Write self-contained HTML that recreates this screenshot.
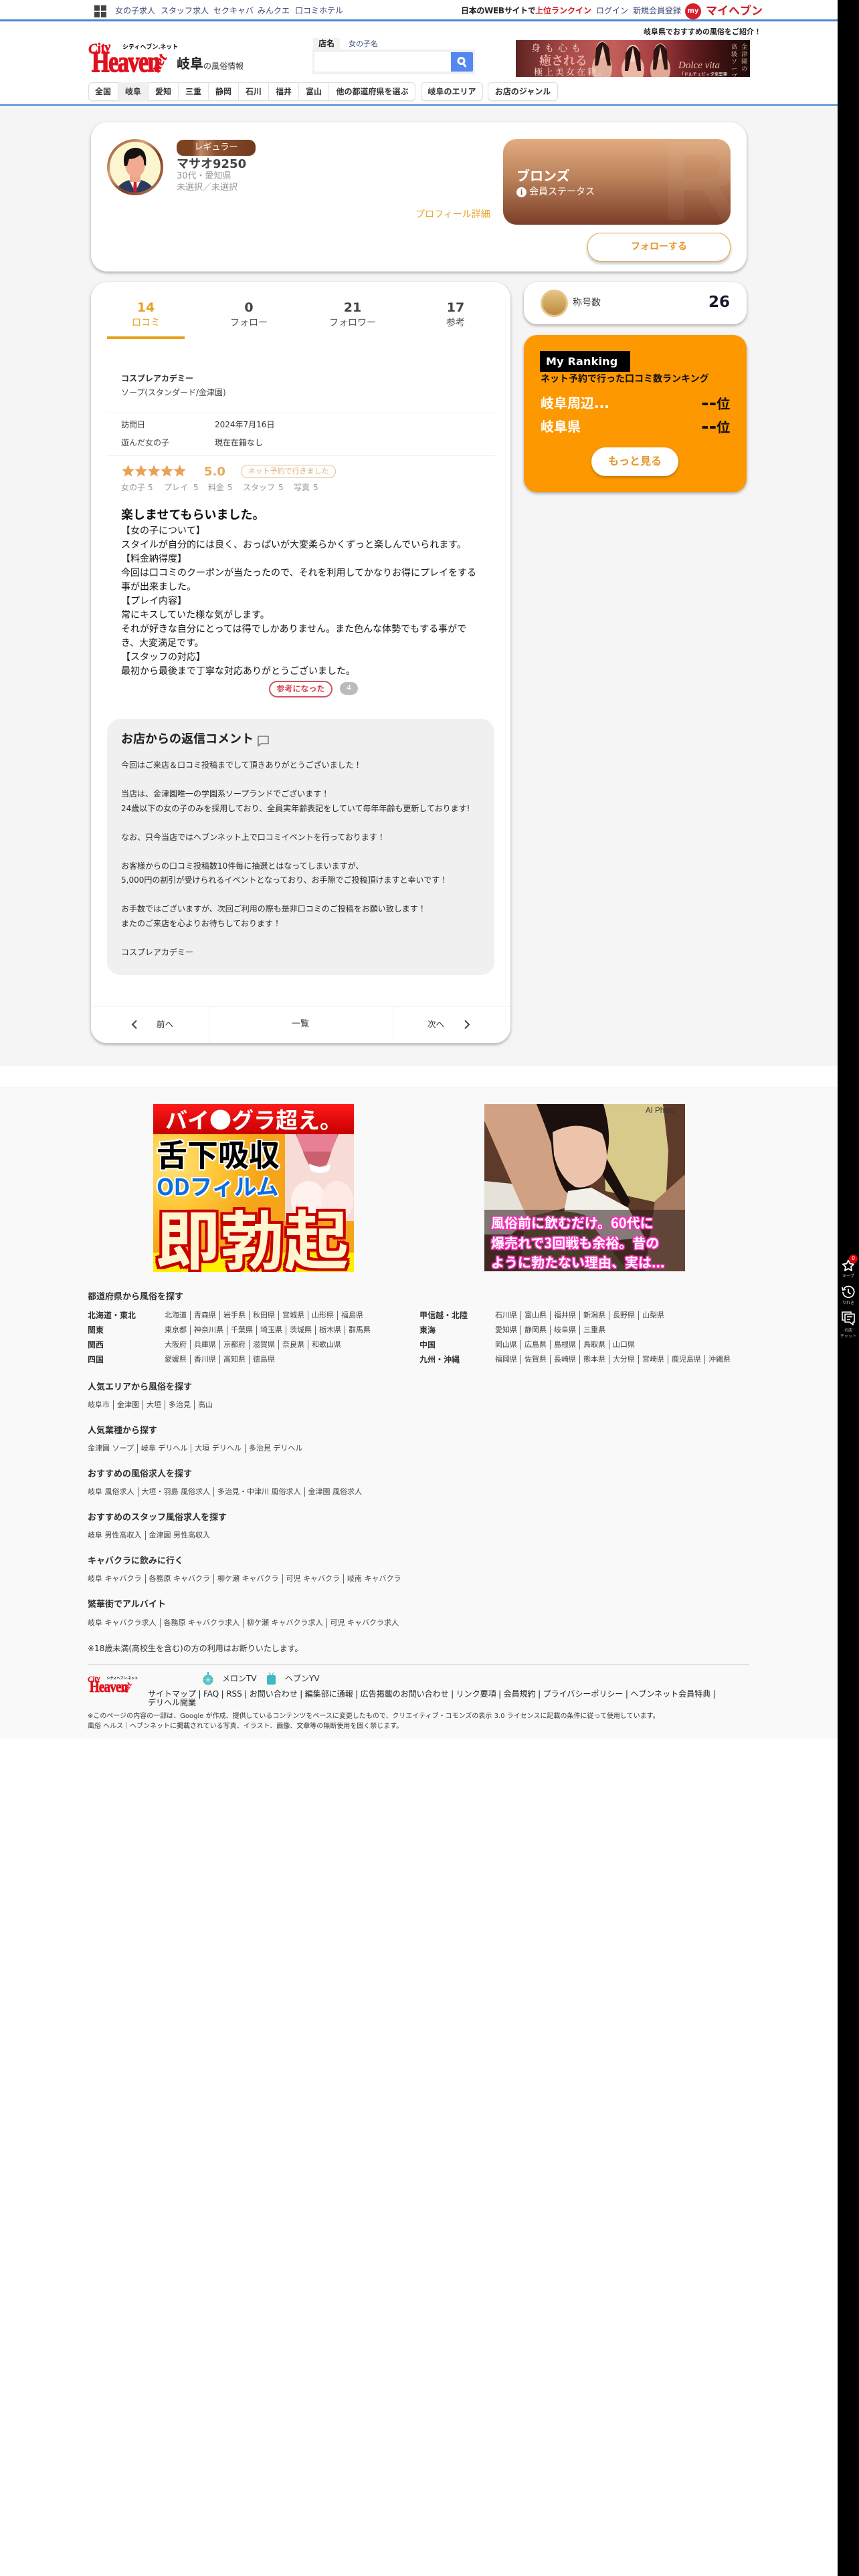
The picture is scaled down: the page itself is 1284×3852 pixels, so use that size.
<!DOCTYPE html>
<html lang="ja"><head><meta charset="utf-8"><title>マサオ9250の口コミ</title>
<style>
html,body{margin:0;padding:0}
body{width:1284px;height:3852px;position:relative;overflow:hidden;background:#fff;font-family:"DejaVu Sans","Noto Sans CJK JP",sans-serif;color:#333}
.a{position:absolute;white-space:nowrap}
.b{font-weight:bold}
.navy{color:#3c4a78;font-size:12px;line-height:16px;top:8px}
.nv{position:absolute;top:123px;height:28px;line-height:28px;text-align:center;font-size:12px;font-weight:bold;color:#333;border-right:1px solid #e3e3e3;box-sizing:border-box}
.box{position:absolute;top:123px;height:28px;background:#fff;border:1px solid #ddd;border-radius:6px;box-sizing:border-box;box-shadow:0 1px 1px rgba(0,0,0,.06)}
.card{position:absolute;background:#fff;box-shadow:0 2px 5px rgba(0,0,0,.32)}
.tab{position:absolute;width:120px;text-align:center;top:449px}
.tab b{display:block;font-size:19px;line-height:22px;color:#444}
.tab span{display:block;font-size:14px;line-height:20px;margin-top:2px;color:#555}
.g{color:#999;font-size:12px;line-height:16px;top:721px}
.h{position:absolute;left:131px;font-size:13px;font-weight:bold;line-height:18px;color:#333;white-space:nowrap}
.l{position:absolute;font-size:11px;line-height:14px;color:#444;white-space:nowrap}
.l i{font-style:normal;display:inline-block;padding:0 5px;border-left:1px solid #666}
.l i:first-child{padding-left:0;border-left:0}
.r{position:absolute;font-size:12px;font-weight:bold;line-height:16px;color:#333;white-space:nowrap}
.side{position:absolute;left:1252px;width:32px;text-align:center;color:#ccc;font-size:6px;line-height:9px;white-space:nowrap}
.rk{position:absolute;left:1048px;font-weight:bold;font-size:20px;line-height:28px;color:#111;white-space:nowrap}
.rk span{font-size:28px;line-height:28px;vertical-align:-1px}
</style></head><body>

<!-- main background bands -->
<div class="a" style="left:0;top:158px;width:1252px;height:1436px;background:#f5f5f5"></div>
<div class="a" style="left:0;top:1625px;width:1252px;height:975px;background:#f9f9f9;border-top:1px solid #f1f1f1;box-sizing:border-box"></div>

<!-- top bar -->
<svg class="a" style="left:141px;top:8px" width="19" height="18"><rect width="8" height="8" fill="#444"/><rect x="10" width="8" height="8" fill="#444"/><rect y="10" width="8" height="8" fill="#444"/><rect x="10" y="10" width="8" height="8" fill="#444"/></svg>
<div class="a navy" style="left:172px">女の子求人</div>
<div class="a navy" style="left:240px">スタッフ求人</div>
<div class="a navy" style="left:319px">セクキャバ</div>
<div class="a navy" style="left:385px">みんクエ</div>
<div class="a navy" style="left:441px">口コミホテル</div>
<div class="a b" style="left:689px;top:8px;font-size:12px;line-height:16px;color:#222;letter-spacing:-.3px">日本のWEBサイトで</div>
<div class="a b" style="left:800px;top:8px;font-size:12px;line-height:16px;color:#d2232a">上位ランクイン</div>
<div class="a navy" style="left:891px">ログイン</div>
<div class="a navy" style="left:946px">新規会員登録</div>
<div class="a" style="left:1024px;top:5px;width:24px;height:24px;border-radius:50%;background:#d81e2c;color:#fff;font-size:10px;line-height:23px;text-align:center;font-weight:bold">my</div>
<div class="a b" style="left:1055px;top:6px;font-size:17px;line-height:22px;color:#d2232a">マイヘブン</div>
<div class="a" style="left:0;top:29px;width:1252px;height:3px;background:#4a86d0"></div>

<!-- logo -->
<div class="a" style="left:132px;top:62px;width:125px;height:48px">
 <div class="a" style="left:0;top:0;font:italic bold 20px/20px 'Liberation Serif',serif;color:#e2101c;transform:rotate(-8deg);-webkit-text-stroke:.6px #e2101c">City</div>
 <div class="a" style="left:5px;top:9px;font:bold 44px/44px 'Liberation Serif',serif;color:#e2101c;letter-spacing:-2px;transform:scaleX(.78);transform-origin:0 0;-webkit-text-stroke:1.4px #e2101c">Heaven</div>
 <div class="a" style="left:92px;top:22px;font:italic bold 21px/21px 'Liberation Serif',serif;color:#e2101c;transform:rotate(-60deg);-webkit-text-stroke:.5px #e2101c">net</div>
 <div class="a b" style="left:51px;top:2px;font-size:9px;line-height:12px;color:#111;font-family:'Noto Sans CJK JP',sans-serif">シティヘブン.ネット</div>
</div>
<div class="a b" style="left:264px;top:82px;font-size:20px;line-height:26px;color:#222">岐阜</div>
<div class="a" style="left:304px;top:90px;font-size:12px;line-height:18px;color:#333">の風俗情報</div>

<!-- search -->
<div class="a b" style="left:468px;top:57px;width:40px;height:17px;background:#f2f2f2;text-align:center;font-size:12px;line-height:17px;color:#222">店名</div>
<div class="a" style="left:521px;top:57px;font-size:11px;line-height:17px;color:#3c4a78">女の子名</div>
<div class="a" style="left:467px;top:74px;width:243px;height:37px;background:#f1f1f1"></div>
<div class="a" style="left:470px;top:78px;width:204px;height:29px;background:#fff"></div>
<div class="a" style="left:674px;top:78px;width:33px;height:29px;background:#5588ee;border-radius:0 2px 2px 0"></div>
<svg class="a" style="left:682px;top:84px" width="17" height="17" viewBox="0 0 17 17"><circle cx="7.5" cy="7" r="4.5" fill="none" stroke="#fff" stroke-width="3"/><path d="M10.5 11l3 4" stroke="#fff" stroke-width="3" stroke-linecap="round"/></svg>

<!-- top banner -->
<div class="a b" style="left:962px;top:40px;font-size:11px;line-height:16px;color:#222">岐阜県でおすすめの風俗をご紹介！</div>
<div class="a" style="left:771px;top:60px;width:350px;height:55px;overflow:hidden;background:linear-gradient(90deg,#5e2322 0%,#a84b48 22%,#c25f5a 42%,#a33c40 60%,#6a1f22 74%,#3a1010 88%,#1d0a0a 100%)">
 <svg class="a" style="left:0;top:0" width="350" height="55">
  <ellipse cx="129" cy="42" rx="15" ry="22" fill="#e2b09d"/><ellipse cx="129" cy="14" rx="9" ry="12" fill="#efc9b8"/><path d="M120 12q9-18 19 0l3 26h-5l-7-30-7 30h-5z" fill="#2c1512"/>
  <ellipse cx="175" cy="44" rx="17" ry="22" fill="#eab8a5"/><ellipse cx="175" cy="20" rx="10" ry="13" fill="#f5d2c2"/><path d="M164 20q11-22 22 0l1 26h-5l-7-36-7 36h-5z" fill="#2b1210"/>
  <ellipse cx="216" cy="44" rx="15" ry="22" fill="#dfa996"/><ellipse cx="216" cy="17" rx="9" ry="12" fill="#f0c8b6"/><path d="M206 16q10-20 20 0l1 28h-5l-6-34-6 34h-5z" fill="#2c1512"/>
 </svg>
 <div class="a" style="left:23px;top:4px;font:14px/16px 'Noto Serif CJK SC',serif;color:#f8dcd2;letter-spacing:6px">身も心も</div>
 <div class="a" style="left:35px;top:20px;font:bold 18px/20px 'Noto Serif CJK SC',serif;color:#eeb0ac">癒される</div>
 <div class="a" style="left:27px;top:40px;font:13px/14px 'Noto Serif CJK SC',serif;color:#f5e0d5;letter-spacing:3px">極上美女在籍。</div>
 <div class="a" style="left:243px;top:30px;font:italic 15px/16px 'Liberation Serif',serif;color:#e6c7a7">Dolce vita</div>
 <div class="a" style="left:245px;top:47px;font-size:6.5px;line-height:9px;color:#fff">「ドルチェビィタ恵里亜</div>
 <div class="a" style="left:322px;top:4px;font:9px/11px 'Noto Serif CJK SC',serif;color:#e6c7a7;white-space:normal;width:10px">高級ソープ</div>
 <div class="a" style="left:337px;top:4px;font:9px/11px 'Noto Serif CJK SC',serif;color:#e6c7a7;white-space:normal;width:10px">金津園の</div>
</div>

<!-- nav -->
<div class="box" style="left:132px;width:489px"></div>
<div class="nv" style="left:132px;width:45px">全国</div>
<div class="nv" style="left:177px;width:45px;background:#f0f0f0">岐阜</div>
<div class="nv" style="left:222px;width:45px">愛知</div>
<div class="nv" style="left:267px;width:45px">三重</div>
<div class="nv" style="left:312px;width:45px">静岡</div>
<div class="nv" style="left:357px;width:45px">石川</div>
<div class="nv" style="left:402px;width:45px">福井</div>
<div class="nv" style="left:447px;width:45px">富山</div>
<div class="nv" style="left:492px;width:129px;border:0">他の都道府県を選ぶ</div>
<div class="box" style="left:629px;width:93px"></div>
<div class="nv" style="left:629px;width:93px;border:0">岐阜のエリア</div>
<div class="box" style="left:729px;width:105px"></div>
<div class="nv" style="left:729px;width:105px;border:0">お店のジャンル</div>
<div class="a" style="left:0;top:156px;width:1252px;height:2px;background:#4a86d0"></div>

<!-- profile card -->
<div class="card" style="left:136px;top:183px;width:980px;height:223px;border-radius:24px"></div>
<svg class="a" style="left:160px;top:208px" width="84" height="84" viewBox="0 0 84 84">
 <defs><linearGradient id="rg" x1="0" y1="0" x2="1" y2="1"><stop offset="0" stop-color="#8b4a28"/><stop offset=".35" stop-color="#d9a27a"/><stop offset=".6" stop-color="#7a3b20"/><stop offset="1" stop-color="#c08a66"/></linearGradient>
 <clipPath id="cc"><circle cx="42" cy="42" r="38"/></clipPath></defs>
 <circle cx="42" cy="42" r="42" fill="url(#rg)"/><circle cx="42" cy="42" r="38" fill="#fbf6cf"/>
 <g clip-path="url(#cc)">
  <path d="M12 84q2-18 22-23h16q20 5 22 23z" fill="#2c3a5e"/>
  <path d="M33 61l9 18 9-18z" fill="#fff"/><path d="M40 63h4l1 14-3 4-3-4z" fill="#c9202c"/>
  <rect x="34" y="50" width="16" height="14" fill="#eba58a"/>
  <ellipse cx="42" cy="38" rx="15" ry="19" fill="#f2ab90"/>
  <path d="M26 40q-5-24 15-27 20-1 17 27l-3-2q1-10-6-14-7 6-16 6l-3 10z" fill="#161212"/>
 </g>
</svg>
<div class="a" style="left:264px;top:209px;width:118px;height:24px;border-radius:10px;background:linear-gradient(90deg,#7c4222 0%,#7c4222 20%,#c08a66 30%,#8b4f2d 50%,#6f3a1d 100%);color:#fff;font-size:13px;line-height:23px;text-align:center">レギュラー</div>
<div class="a b" style="left:264px;top:234px;font-size:18px;line-height:24px;color:#444">マサオ9250</div>
<div class="a" style="left:264px;top:255px;font-size:13px;line-height:18px;color:#999">30代・愛知県</div>
<div class="a" style="left:264px;top:272px;font-size:13px;line-height:18px;color:#999">未選択／未選択</div>
<div class="a" style="left:621px;top:311px;font-size:14px;line-height:20px;color:#e8a42c">プロフィール詳細</div>
<div class="a" style="left:752px;top:208px;width:340px;height:128px;border-radius:20px;overflow:hidden;background:linear-gradient(180deg,#e2ac80 0%,#bb825b 45%,#7c3e28 100%)">
 <div class="a" style="left:235px;top:-12px;font:bold 170px/150px 'Liberation Sans',sans-serif;color:rgba(255,255,255,.045)">R</div>
</div>
<div class="a b" style="left:772px;top:250px;font-size:20px;line-height:26px;color:#fff">ブロンズ</div>
<div class="a" style="left:772px;top:280px;width:15px;height:15px;border-radius:50%;background:#fff;color:#8a4a30;font:bold 12px/15px 'Liberation Serif',serif;text-align:center">i</div>
<div class="a" style="left:791px;top:277px;font-size:14px;line-height:20px;color:#fff">会員ステータス</div>
<div class="a b" style="left:878px;top:348px;width:214px;height:43px;box-sizing:border-box;border:1.5px solid #e9a53c;border-radius:20px;background:#fff;box-shadow:0 3px 5px rgba(0,0,0,.25);text-align:center;font-size:14px;line-height:40px;color:#e8982c">フォローする</div>

<!-- main card -->
<div class="card" style="left:136px;top:422px;width:627px;height:1138px;border-radius:24px"></div>
<div class="tab" style="left:158px"><b style="color:#e8a020">14</b><span style="color:#e8a020">口コミ</span></div>
<div class="tab" style="left:312px"><b>0</b><span>フォロー</span></div>
<div class="tab" style="left:467px"><b>21</b><span>フォロワー</span></div>
<div class="tab" style="left:621px"><b>17</b><span>参考</span></div>
<div class="a" style="left:160px;top:503px;width:116px;height:4px;background:#e8a020"></div>

<div class="a b" style="left:181px;top:558px;font-size:12px;line-height:16px;color:#333">コスプレアカデミー</div>
<div class="a" style="left:181px;top:579px;font-size:12px;line-height:16px;color:#444">ソープ(スタンダード/金津園)</div>
<div class="a" style="left:160px;top:617px;width:580px;height:1px;background:#eee"></div>
<div class="a" style="left:181px;top:627px;font-size:12px;line-height:16px;color:#444">訪問日</div>
<div class="a" style="left:321px;top:627px;font-size:12px;line-height:16px;color:#333">2024年7月16日</div>
<div class="a" style="left:181px;top:654px;font-size:12px;line-height:16px;color:#444">遊んだ女の子</div>
<div class="a" style="left:321px;top:654px;font-size:12px;line-height:16px;color:#333">現在在籍なし</div>
<div class="a" style="left:160px;top:681px;width:580px;height:1px;background:#eee"></div>
<svg class="a" style="left:182px;top:694px" width="98" height="20" viewBox="0 0 98 20">
 <g fill="#e9a154"><path id="s" d="M9.5 1l2.6 6.2 6.7.5-5.1 4.4 1.6 6.5-5.8-3.5-5.8 3.5 1.6-6.5L.2 7.7l6.7-.5z"/>
 <use href="#s" x="19.3"/><use href="#s" x="38.6"/><use href="#s" x="57.9"/><use href="#s" x="77.2"/></g></svg>
<div class="a b" style="left:305px;top:694px;font-size:18px;line-height:24px;color:#e8a95c">5.0</div>
<div class="a" style="left:360px;top:695px;width:142px;height:20px;box-sizing:border-box;border:1px solid #e3bd8e;border-radius:10px;text-align:center;font-size:11px;line-height:17px;color:#d9b07c">ネット予約で行きました</div>
<div class="a g" style="left:181px">女の子</div><div class="a g" style="left:221px">5</div>
<div class="a g" style="left:245px">プレイ</div><div class="a g" style="left:289px">5</div>
<div class="a g" style="left:311px">料金</div><div class="a g" style="left:340px">5</div>
<div class="a g" style="left:363px">スタッフ</div><div class="a g" style="left:416px">5</div>
<div class="a g" style="left:439px">写真</div><div class="a g" style="left:468px">5</div>

<div class="a b" style="left:181px;top:758px;font-size:18px;line-height:26px;color:#111">楽しませてもらいました。</div>
<div class="a" style="left:181px;top:783.5px;font-size:14px;line-height:21px;color:#161616">【女の子について】<br>スタイルが自分的には良く、おっぱいが大変柔らかくずっと楽しんでいられます。<br>【料金納得度】<br>今回は口コミのクーポンが当たったので、それを利用してかなりお得にプレイをする<br>事が出来ました。<br>【プレイ内容】<br>常にキスしていた様な気がします。<br>それが好きな自分にとっては得でしかありません。また色んな体勢でもする事がで<br>き、大変満足です。<br>【スタッフの対応】<br>最初から最後まで丁寧な対応ありがとうございました。</div>
<div class="a b" style="left:402px;top:1018px;width:95px;height:25px;box-sizing:border-box;border:2px solid #c9595f;border-radius:13px;text-align:center;font-size:12px;line-height:20px;color:#d9434a">参考になった</div>
<div class="a" style="left:508px;top:1020px;width:27px;height:19px;border-radius:10px;background:#bbb;color:#fff;text-align:center;font-size:11px;line-height:18px">4</div>

<div class="a" style="left:160px;top:1075px;width:579px;height:383px;border-radius:20px;background:#f0f0f0"></div>
<div class="a b" style="left:181px;top:1093px;font-size:18px;line-height:26px;color:#222">お店からの返信コメント</div>
<svg class="a" style="left:384px;top:1099px" width="19" height="18" viewBox="0 0 19 18"><path d="M2 2h15v11H6l-4 3.5z" fill="none" stroke="#777" stroke-width="1.6" stroke-linejoin="round"/></svg>
<div class="a" style="left:181px;top:1134px;font-size:12px;line-height:21.5px;color:#2a2a2a">今回はご来店＆口コミ投稿までして頂きありがとうございました！<br><br>当店は、金津園唯一の学園系ソープランドでございます！<br>24歳以下の女の子のみを採用しており、全員実年齢表記をしていて毎年年齢も更新しております!<br><br>なお、只今当店ではヘブンネット上で口コミイベントを行っております！<br><br>お客様からの口コミ投稿数10件毎に抽選とはなってしまいますが、<br>5,000円の割引が受けられるイベントとなっており、お手隙でご投稿頂けますと幸いです！<br><br>お手数ではございますが、次回ご利用の際も是非口コミのご投稿をお願い致します！<br>またのご来店を心よりお待ちしております！<br><br>コスプレアカデミー</div>

<div class="a" style="left:136px;top:1504px;width:627px;height:1px;background:#eee"></div>
<div class="a" style="left:312px;top:1504px;width:1px;height:56px;background:#eee"></div>
<div class="a" style="left:587px;top:1504px;width:1px;height:50px;background:#eee"></div>
<svg class="a" style="left:196px;top:1525px" width="10" height="14"><path d="M8 1L2 7l6 6" fill="none" stroke="#444" stroke-width="2"/></svg>
<div class="a" style="left:234px;top:1523px;font-size:12.5px;line-height:18px;color:#333">前へ</div>
<div class="a" style="left:436px;top:1523px;font-size:13px;line-height:18px;color:#333">一覧</div>
<div class="a" style="left:639px;top:1523px;font-size:12.5px;line-height:18px;color:#333">次へ</div>
<svg class="a" style="left:693px;top:1525px" width="10" height="14"><path d="M2 1l6 6-6 6" fill="none" stroke="#444" stroke-width="2"/></svg>

<!-- side cards -->
<div class="card" style="left:783px;top:422px;width:333px;height:63px;border-radius:20px"></div>
<svg class="a" style="left:808px;top:433px" width="41" height="41" viewBox="0 0 41 41"><defs><linearGradient id="mg" x1="0" y1="0" x2="0" y2="1"><stop offset="0" stop-color="#e3c27f"/><stop offset="1" stop-color="#bd8a3e"/></linearGradient></defs><circle cx="20.5" cy="20.5" r="20.5" fill="#e5c78b"/><circle cx="20.5" cy="20.5" r="17.5" fill="url(#mg)"/></svg>
<div class="a" style="left:856px;top:443px;font-size:14px;line-height:20px;color:#333">称号数</div>
<div class="a b" style="left:1059px;top:437px;font-size:23px;line-height:30px;color:#16182e">26</div>

<div class="card" style="left:783px;top:501px;width:333px;height:235px;border-radius:20px;background:#fd9800"></div>
<div class="a" style="left:807px;top:525px;width:135px;height:31px;background:#000"></div>
<div class="a b" style="left:816px;top:527px;font-size:16px;line-height:27px;letter-spacing:.2px;color:#fff">My Ranking</div>
<div class="a b" style="left:808px;top:557px;font-size:14px;line-height:20px;color:#111">ネット予約で行った口コミ数ランキング</div>
<div class="a b" style="left:808px;top:589px;font-size:20px;line-height:28px;color:#fff">岐阜周辺...</div>
<div class="rk" style="top:589px"><span>--</span>位</div>
<div class="a b" style="left:808px;top:624px;font-size:20px;line-height:28px;color:#fff">岐阜県</div>
<div class="rk" style="top:624px"><span>--</span>位</div>
<div class="a b" style="left:884px;top:669px;width:130px;height:43px;border-radius:22px;background:#fff;box-shadow:0 2px 4px rgba(0,0,0,.25);text-align:center;font-size:16px;line-height:42px;color:#e8982c">もっと見る</div>

<!-- ad 1 -->
<div class="a" style="left:229px;top:1651px;width:300px;height:251px;overflow:hidden;background:radial-gradient(circle at 30px 90px,#ffe27a 0,#ffc93a 60px,#f6a419 130px);font-family:'Noto Sans CJK JP',sans-serif;font-weight:bold">
 <div class="a" style="left:0;top:0;width:300px;height:45px;background:linear-gradient(180deg,#ff1a1a,#c70000)"></div>
 <div class="a" style="left:18px;top:0;font-size:33px;line-height:45px;color:#fff">バイ●グラ超え。</div>
 <svg class="a" style="left:197px;top:45px" width="103" height="130"><rect width="103" height="130" fill="#c9616f"/><rect x="18" width="60" height="26" fill="#e77f95"/><path d="M0 130V0h16l10 24q4 12 10 22 12 6 26 0 4-8 8-22l10-24h23v130z" fill="#f7dcd6"/><ellipse cx="35" cy="100" rx="26" ry="30" fill="#fff1ee"/><ellipse cx="78" cy="100" rx="24" ry="30" fill="#fdeae6"/><path d="M36 44q22 10 32 0l-2 10q-14 8-28 0z" fill="#fff"/></svg>
 <div class="a" style="left:5px;top:47px;font-size:46px;line-height:54px;color:#000;text-shadow:2px 0 #fff,-2px 0 #fff,0 2px #fff,0 -2px #fff,2px 2px #fff,-2px -2px #fff,2px -2px #fff,-2px 2px #fff">舌下吸収</div>
 <div class="a" style="left:5px;top:100px;font-size:34px;line-height:44px;color:#0a6fe0;letter-spacing:-.5px;text-shadow:2px 0 #fff,-2px 0 #fff,0 2px #fff,0 -2px #fff,2px 2px #fff,-2px -2px #fff">ODフィルム</div>
 <div class="a" style="left:0;top:222px;width:300px;height:29px;background:#ffef00"></div>
 <div class="a" style="left:4px;top:146px;font-size:96px;line-height:104px;color:#fff6cf;letter-spacing:0;text-shadow:4px 0 #c90000,-4px 0 #c90000,0 4px #c90000,0 -4px #c90000,4px 4px #c90000,-4px -4px #c90000,4px -4px #c90000,-4px 4px #c90000">即勃起</div>
</div>

<!-- ad 2 -->
<div class="a" style="left:724px;top:1651px;width:300px;height:250px;overflow:hidden;background:#5b3a2b;font-family:'Noto Sans CJK JP',sans-serif">
 <svg class="a" style="left:0;top:0" width="300" height="250">
  <rect width="300" height="250" fill="#5e3a2a"/>
  <path d="M175 0h92l8 70-4 80-90-20z" fill="#d8ca8b"/>
  <path d="M0 115l50 5 20 50-30 25H0z" fill="#e6e2da"/>
  <path d="M0 0h88l44 122 2 30-70 18-18-40-46-105z" fill="#d0a283"/>
  <path d="M78 0h100q14 50 4 80l36 65-6 14-40-60-30 50-22-20q-18-30-20-70-10-30-22-59z" fill="#1b100e"/>
  <path d="M102 42q38-20 74 2 14 36 0 62-18 22-40 18-24-14-32-48z" fill="#ecc4ab"/>
  <path d="M125 130l35-5 55 30 25 45-130 10z" fill="#f3f0ea"/>
  <path d="M60 172q50-20 90-6l65 85H55z" fill="#6d6a3a"/>
  <path d="M255 145l45-40v145h-60z" fill="#a87b60"/>
 </svg>
 <div class="a" style="left:0;top:158px;width:300px;height:92px;background:rgba(40,25,25,.55)"></div>
 <div class="a" style="left:241px;top:2px;font-size:11.5px;line-height:16px;color:#333;font-family:'Liberation Sans',sans-serif">AI Photo</div>
 <div class="a b" style="left:10px;top:162px;font-size:20px;line-height:29.5px;color:#fff;text-shadow:0 0 2px #ff2fc0,1.5px 1.5px 1px #ff2fc0,-1.5px -1.5px 1px #ff2fc0,1.5px -1.5px 1px #ff2fc0,-1.5px 1.5px 1px #ff2fc0">風俗前に飲むだけ。60代に<br>爆売れで3回戦も余裕。昔の<br>ように勃たない理由、実は...</div>
</div>

<!-- footer links -->
<div class="h" style="top:1931px">都道府県から風俗を探す</div>
<div class="r" style="left:131px;top:1959px">北海道・東北</div>
<div class="l" style="left:246px;top:1960px"><i>北海道</i><i>青森県</i><i>岩手県</i><i>秋田県</i><i>宮城県</i><i>山形県</i><i>福島県</i></div>
<div class="r" style="left:131px;top:1981px">関東</div>
<div class="l" style="left:246px;top:1982px"><i>東京都</i><i>神奈川県</i><i>千葉県</i><i>埼玉県</i><i>茨城県</i><i>栃木県</i><i>群馬県</i></div>
<div class="r" style="left:131px;top:2003px">関西</div>
<div class="l" style="left:246px;top:2004px"><i>大阪府</i><i>兵庫県</i><i>京都府</i><i>滋賀県</i><i>奈良県</i><i>和歌山県</i></div>
<div class="r" style="left:131px;top:2025px">四国</div>
<div class="l" style="left:246px;top:2026px"><i>愛媛県</i><i>香川県</i><i>高知県</i><i>徳島県</i></div>
<div class="r" style="left:627px;top:1959px">甲信越・北陸</div>
<div class="l" style="left:740px;top:1960px"><i>石川県</i><i>富山県</i><i>福井県</i><i>新潟県</i><i>長野県</i><i>山梨県</i></div>
<div class="r" style="left:627px;top:1981px">東海</div>
<div class="l" style="left:740px;top:1982px"><i>愛知県</i><i>静岡県</i><i>岐阜県</i><i>三重県</i></div>
<div class="r" style="left:627px;top:2003px">中国</div>
<div class="l" style="left:740px;top:2004px"><i>岡山県</i><i>広島県</i><i>島根県</i><i>鳥取県</i><i>山口県</i></div>
<div class="r" style="left:627px;top:2025px">九州・沖縄</div>
<div class="l" style="left:740px;top:2026px"><i>福岡県</i><i>佐賀県</i><i>長崎県</i><i>熊本県</i><i>大分県</i><i>宮崎県</i><i>鹿児島県</i><i>沖縄県</i></div>

<div class="h" style="top:2066px">人気エリアから風俗を探す</div>
<div class="l" style="left:131px;top:2094px"><i>岐阜市</i><i>金津園</i><i>大垣</i><i>多治見</i><i>高山</i></div>
<div class="h" style="top:2131px">人気業種から探す</div>
<div class="l" style="left:131px;top:2159px"><i>金津園 ソープ</i><i>岐阜 デリヘル</i><i>大垣 デリヘル</i><i>多治見 デリヘル</i></div>
<div class="h" style="top:2196px">おすすめの風俗求人を探す</div>
<div class="l" style="left:131px;top:2224px"><i>岐阜 風俗求人</i><i>大垣・羽島 風俗求人</i><i>多治見・中津川 風俗求人</i><i>金津園 風俗求人</i></div>
<div class="h" style="top:2261px">おすすめのスタッフ風俗求人を探す</div>
<div class="l" style="left:131px;top:2289px"><i>岐阜 男性高収入</i><i>金津園 男性高収入</i></div>
<div class="h" style="top:2326px">キャバクラに飲みに行く</div>
<div class="l" style="left:131px;top:2354px"><i>岐阜 キャバクラ</i><i>各務原 キャバクラ</i><i>柳ケ瀬 キャバクラ</i><i>可児 キャバクラ</i><i>岐南 キャバクラ</i></div>
<div class="h" style="top:2391px">繁華街でアルバイト</div>
<div class="l" style="left:131px;top:2420px"><i>岐阜 キャバクラ求人</i><i>各務原 キャバクラ求人</i><i>柳ケ瀬 キャバクラ求人</i><i>可児 キャバクラ求人</i></div>
<div class="a" style="left:131px;top:2456px;font-size:12px;line-height:18px;color:#333">※18歳未満(高校生を含む)の方の利用はお断りいたします。</div>
<div class="a" style="left:131px;top:2488px;width:989px;height:1px;background:#ccc"></div>

<!-- footer logo -->
<div class="a" style="left:131px;top:2505px;width:125px;height:48px;transform:scale(.56);transform-origin:0 0">
 <div class="a" style="left:0;top:0;font:italic bold 20px/20px 'Liberation Serif',serif;color:#e2101c;transform:rotate(-8deg);-webkit-text-stroke:.6px #e2101c">City</div>
 <div class="a" style="left:5px;top:9px;font:bold 44px/44px 'Liberation Serif',serif;color:#e2101c;letter-spacing:-2px;transform:scaleX(.78);transform-origin:0 0;-webkit-text-stroke:1.4px #e2101c">Heaven</div>
 <div class="a" style="left:92px;top:22px;font:italic bold 21px/21px 'Liberation Serif',serif;color:#e2101c;transform:rotate(-60deg);-webkit-text-stroke:.5px #e2101c">net</div>
 <div class="a b" style="left:51px;top:2px;font-size:9px;line-height:12px;color:#111;font-family:'Noto Sans CJK JP',sans-serif">シティヘブン.ネット</div>
</div>
<svg class="a" style="left:303px;top:2500px" width="16" height="20" viewBox="0 0 16 20"><path d="M8 0v5" stroke="#3fb8c0" stroke-width="2"/><circle cx="8" cy="12" r="7.5" fill="#3fb8c0"/><path d="M1 12h14M8 5v14M3 7l10 10M13 7L3 17" stroke="#d7f1f2" stroke-width=".7"/></svg>
<div class="a" style="left:332px;top:2502px;font-size:12px;line-height:16px;color:#333">メロンTV</div>
<svg class="a" style="left:399px;top:2501px" width="13" height="18" viewBox="0 0 13 18"><path d="M3 0l3 5M10 0L7 5" stroke="#3fb8c0" stroke-width="1.2"/><rect y="4" width="13" height="14" rx="2" fill="#3fb8c0"/></svg>
<div class="a" style="left:426px;top:2502px;font-size:12px;line-height:16px;color:#333">ヘブンYV</div>
<div class="a" style="left:221px;top:2527px;font-size:12px;line-height:12.5px;color:#222;word-spacing:-.35px">サイトマップ | FAQ | RSS | お問い合わせ | 編集部に通報 | 広告掲載のお問い合わせ | リンク要項 | 会員規約 | プライバシーポリシー | ヘブンネット会員特典 |<br>デリヘル開業</div>
<div class="a" style="left:131px;top:2560px;font-size:10px;line-height:14px;color:#333">※このページの内容の一部は、Google が作成、提供しているコンテンツをベースに変更したもので、クリエイティブ・コモンズの表示 3.0 ライセンスに記載の条件に従って使用しています。</div>
<div class="a" style="left:131px;top:2575px;font-size:10px;line-height:14px;color:#333">風俗 ヘルス｜ヘブンネットに掲載されている写真、イラスト、画像、文章等の無断使用を固く禁じます。</div>

<!-- black sidebar -->
<div class="a" style="left:1252px;top:0;width:32px;height:3852px;background:#000"></div>
<svg class="a" style="left:1258px;top:1883px" width="20" height="18" viewBox="0 0 20 18"><path d="M10 1.5l2.5 5.2 5.7.7-4.2 3.9 1.1 5.6-5.1-2.8-5.1 2.8 1.1-5.6L1.8 7.4l5.7-.7z" fill="none" stroke="#fff" stroke-width="1.8" stroke-linejoin="round"/></svg>
<div class="a" style="left:1269px;top:1876px;width:13px;height:13px;border-radius:50%;background:#e3000f;color:#fff;font-size:8px;line-height:12px;text-align:center">0</div>
<div class="side" style="top:1904px">キープ</div>
<svg class="a" style="left:1258px;top:1922px" width="20" height="20" viewBox="0 0 20 20"><path d="M3.2 5.5A8.3 8.3 0 1 1 2 10" fill="none" stroke="#fff" stroke-width="1.8"/><path d="M1 2.5l.6 4.6 4.4-.8" fill="none" stroke="#fff" stroke-width="1.6"/><path d="M10 5v5.5l3.5 2.5" fill="none" stroke="#fff" stroke-width="1.8"/></svg>
<div class="side" style="top:1944px">りれき</div>
<svg class="a" style="left:1258px;top:1961px" width="20" height="21" viewBox="0 0 20 21"><path d="M14 3V1H1v12h3" fill="none" stroke="#fff" stroke-width="1.6"/><path d="M5 4h14v12h-2v4l-5-4H5z" fill="none" stroke="#fff" stroke-width="1.6" stroke-linejoin="round"/><path d="M8 8h8M8 12h5" stroke="#fff" stroke-width="1.5"/></svg>
<div class="side" style="top:1985px">お店<br>チャット</div>
</body></html>
